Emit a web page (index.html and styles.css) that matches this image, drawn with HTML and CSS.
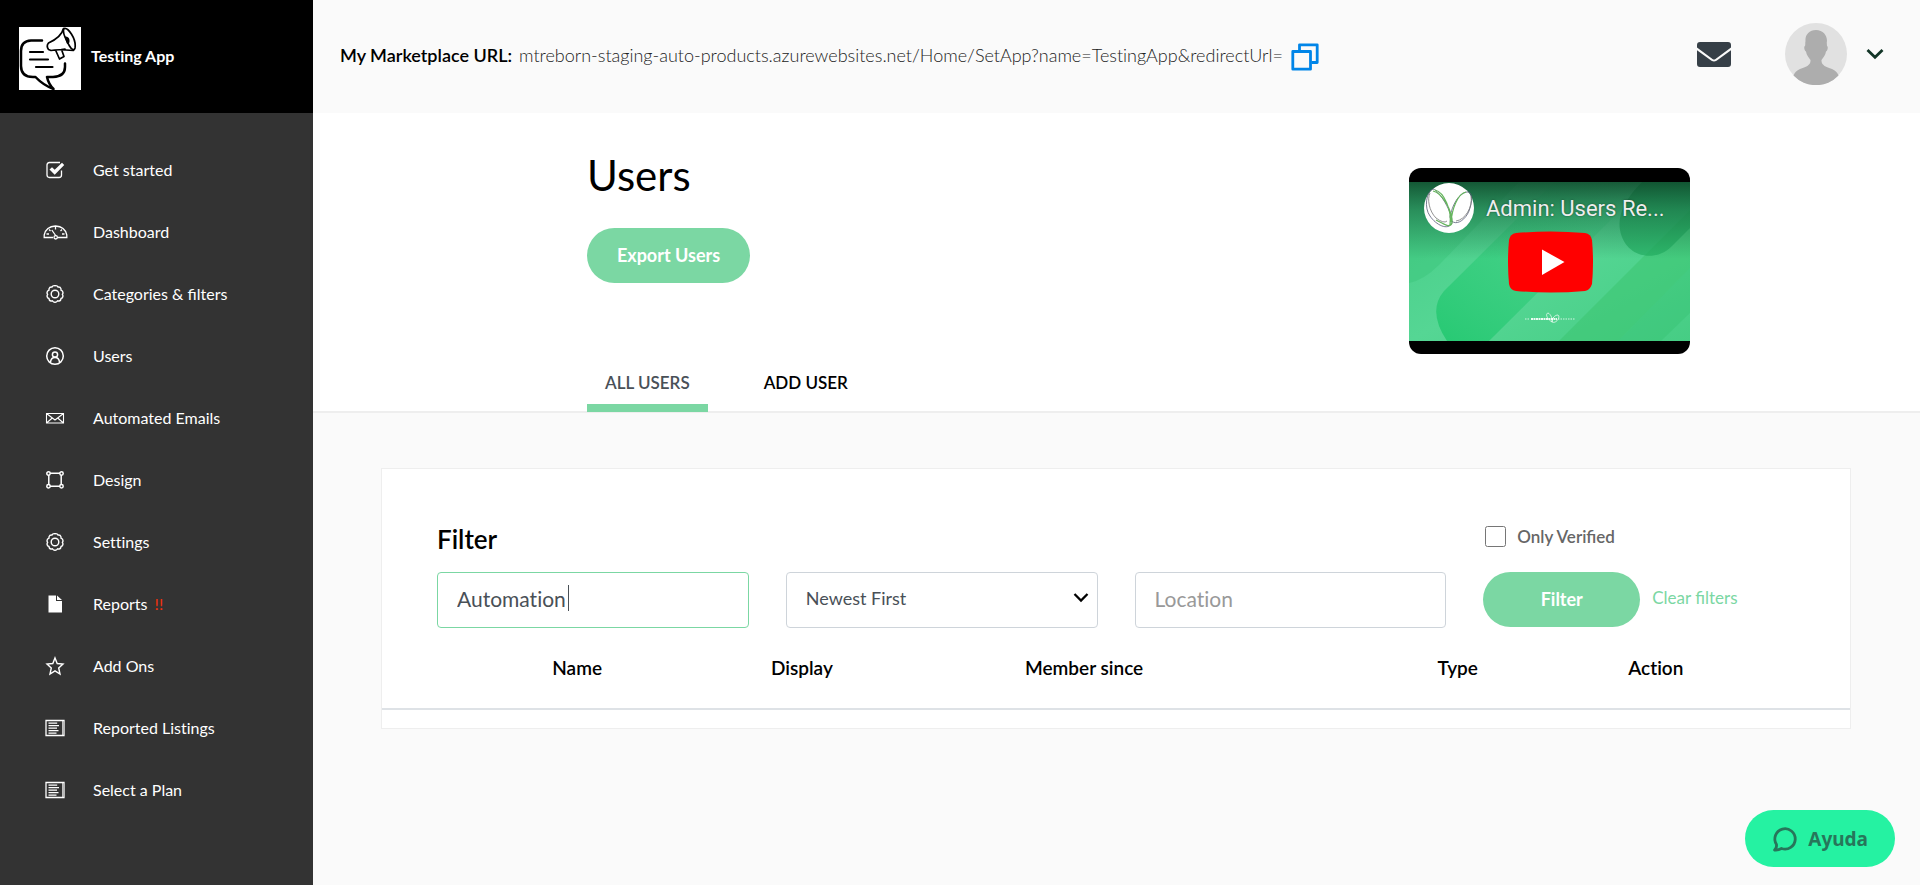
FILE: index.html
```html
<!DOCTYPE html>
<html lang="en">
<head>
<meta charset="utf-8">
<title>Users - Testing App</title>
<link rel="stylesheet" href="styles.css">
</head>
<body>
<svg class="symbols" aria-hidden="true">
  <symbol id="gear" viewBox="0 0 20 20"><g fill="none" stroke="currentColor" stroke-width="1.4"><path d="M10 1.700Q12.200 1.200 13.100 3.100 15.300 2.800 15.900 4.600 16.100 5.300 16 6.100 18 6.800 18 8.700 18 9.500 17.400 10.300 18.600 12 17.500 13.500 17 14.100 16.100 14.400 16 16.500 14.200 17 13.400 17.200 12.500 16.800 11.400 18.400 10 18.300 8.600 18.400 7.500 16.800 6.600 17.200 5.800 17 4 16.500 3.900 14.400 3 14.100 2.500 13.500 1.400 12 2.600 10.300 2 9.500 2 8.700 2 6.800 4 6.100 3.900 5.300 4.100 4.600 4.700 2.800 6.900 3.100 7.800 1.200 10 1.700Z"/><circle cx="10" cy="10" r="3.800"/></g></symbol>
  <symbol id="list" viewBox="0 0 20 20"><path d="M1 2.500h18v15H1z" fill="none" stroke="currentColor" stroke-width="1.300"/><path d="M17.500 3v14" stroke="currentColor" opacity=".7"/><path d="M3.500 5.200h8.700M3.500 7.700h10.500M3.500 10.200h8.500M3.500 12.700h10M3.500 15.200h8" stroke="currentColor" stroke-width="1.200"/></symbol>
</svg>
<div class="app">
  <aside class="sidebar">
    <div class="brand">
      <svg class="brand-logo" viewBox="0 0 62 63" aria-hidden="true"><path fill="#fff" d="M0 0h62v63H0z"/><g fill="none" stroke="#000" stroke-linecap="round" stroke-linejoin="round"><path stroke-width="2.500" d="M23 13.500H12Q2 14 2 24V39Q2 50 14 50H16.500Q24 58 34.500 62Q29.500 57 28 50H34Q46 49.500 46 40V36.500"/><path stroke-width="2.200" d="M11 25H24M11 32.500H29M17 40H33.500"/><path stroke-width="1.700" d="M44.500 1.500Q42.500 10 29.500 16Q27 19 29.500 22.500L32 23.500Q38 22 54.500 23.500M32 23.500L36.500 23 40.500 32 45 29.500 42.500 22.500 46 22"/><path stroke-width="1.700" d="M45 1.500C49 0 57.500 12 56 21C55.500 23.500 53 23.500 50.500 19C47 13 43 5 45 1.500Z"/></g><path d="M45.500 9.500Q50 9 50.500 13Q51 17 48 17Z"/></svg>
      <span>Testing App</span>
    </div>
    <nav class="menu">
      <a href="#"><svg viewBox="0 0 20 20"><path d="M16.500 10.500V15Q16.500 17.500 14 17.500H4.500Q2 17.500 2 15V5Q2 2.500 4.500 2.500H15" fill="none" stroke="currentColor" stroke-width="1.300"/><path d="M4.500 9.500L7 7.200 9.700 9.800 17 2.700 19.200 5 9.700 14.700Z" fill="currentColor"/></svg><span>Get started</span></a>
      <a href="#"><svg class="wide" viewBox="0 0 25 20"><g fill="none" stroke="currentColor" stroke-width="1.300"><path d="M10 15.500H1.200V13Q3 4.500 12.500 4Q22 4.500 23.800 13V15.500H14.500"/><path d="M12.500 4.500V7.500M3.500 12H6M19 12H21.500M6 7.500L7.500 9M19 7.500L17.500 9M8.800 8L13 14"/><circle cx="12.700" cy="15.300" r="1.700"/></g></svg><span>Dashboard</span></a>
      <a href="#"><svg><use href="#gear"/></svg><span class="ligatures">Categories &amp; filters</span></a>
      <a href="#"><svg viewBox="0 0 20 20"><g fill="none" stroke="currentColor" stroke-width="1.500"><circle cx="10" cy="10" r="8.300"/><circle cx="10" cy="8.500" r="2.600"/><path d="M5.500 16Q6 11.500 10 11.500Q14 11.500 14.500 16"/></g></svg><span>Users</span></a>
      <a href="#"><svg viewBox="0 0 20 20"><path d="M1.500 5.500h17v9.500h-17zM1.500 5.500L10 12 18.500 5.500M1.500 15L7.300 10M18.500 15L12.700 10" fill="none" stroke="currentColor" stroke-width="1.100"/></svg><span>Automated Emails</span></a>
      <a href="#"><svg viewBox="0 0 20 20"><g fill="none" stroke="currentColor" stroke-width="1.500"><path d="M5 3.200H15M5 16.300H15M3.800 5V15M16.200 5V15"/><circle cx="3.500" cy="3.500" r="1.700"/><circle cx="16.500" cy="3.500" r="1.700"/><circle cx="3.500" cy="16.200" r="1.700"/><circle cx="16.500" cy="16.200" r="1.700"/></g></svg><span>Design</span></a>
      <a href="#"><svg><use href="#gear"/></svg><span>Settings</span></a>
      <a href="#"><svg viewBox="0 0 20 20"><path d="M3.500 1.500H11V7H17V18.500H3.500ZM12 1.500L17 6H12Z" fill="currentColor"/></svg><span>Reports <b class="alert">!!</b></span></a>
      <a href="#"><svg viewBox="0 0 20 20"><path d="M10 2L12.200 7.500 18 8 13.700 12 15 18 10 14.900 5 18 6.300 12 2 8 7.800 7.500Z" fill="none" stroke="currentColor" stroke-width="1.400"/></svg><span>Add Ons</span></a>
      <a href="#"><svg><use href="#list"/></svg><span>Reported Listings</span></a>
      <a href="#"><svg><use href="#list"/></svg><span>Select a Plan</span></a>
    </nav>
  </aside>
  <div class="main">
    <header class="topbar">
      <strong class="url-label">My Marketplace URL:</strong>
      <span class="url">mtreborn-staging-auto-products.azurewebsites.net/Home/SetApp?name=TestingApp&amp;redirectUrl=</span>
      <button class="icon-button" type="button" aria-label="Copy URL"><svg width="28" height="28" viewBox="0 0 28 28"><g fill="none" stroke="#0085e8" stroke-width="2.800" stroke-linejoin="round"><path d="M8.500 7.500V1.800H26.200V19.500H20.500"/><path d="M1.800 8.500H19.500V26.200H1.800Z"/></g></svg></button>
      <div class="account">
        <button class="icon-button" type="button" aria-label="Messages"><svg width="34" height="26" viewBox="0 0 34 26"><path fill="#363f47" d="M3 0H31Q34 0 34 3V5.500L18.500 17Q17 18 15.500 17L0 5.500V3Q0 0 3 0ZM0 8.200L14.500 18.800Q17 20.300 19.500 18.800L34 8.200V22Q34 25 31 25H3Q0 25 0 22Z"/></svg></button>
        <button class="profile" type="button" aria-label="Account"><svg width="62" height="62" viewBox="0 0 62 62"><circle cx="31" cy="31" r="31" fill="#e1e1e1"/><path fill="#adadad" d="M31 7C38 7 42 12 42 18C41.500 20 42 21.500 42 23C43.500 23.500 42.500 28 41 28.500C40.500 32 38.500 34 36.500 37C36 42 41 44 47 46Q52 48 53.500 52.500A31 31 0 0 1 8.500 52.500Q10 48 15 46C21 44 26 42 25.500 37C23.500 34 21.500 32 21 28.500C19.500 28 18.500 23.500 20 23C20.500 21.500 20 20 20.500 18C20 12 24 7 31 7Z"/></svg><svg width="18" height="12" viewBox="0 0 18 12"><path d="M1.500 2L9 9.300 16.500 2" fill="none" stroke="#123527" stroke-width="2.800"/></svg></button>
      </div>
    </header>
    <section class="page-head">
      <div class="page-intro">
        <div class="page-title">
          <h1>Users</h1>
          <button class="pill export-button" type="button">Export Users</button>
        </div>
        <nav class="tabs">
          <a class="active" href="#">ALL USERS</a>
          <a href="#">ADD USER</a>
        </nav>
      </div>
      <a class="video" href="#" aria-label="Play video">
        <svg class="video-art" viewBox="0 0 281 186" aria-hidden="true">
          <defs>
            <linearGradient id="base" x1="0" y1="0" x2="1" y2="1"><stop offset="0" stop-color="#45cc86"/><stop offset=".5" stop-color="#55d694"/><stop offset="1" stop-color="#46cd84"/></linearGradient>
            <linearGradient id="shade" x1="0" y1="0" x2="0" y2="1"><stop offset="0" stop-color="#093b22" stop-opacity=".8"/><stop offset=".3" stop-color="#0f5132" stop-opacity=".48"/><stop offset=".8" stop-color="#0f5132" stop-opacity="0"/></linearGradient>
            <linearGradient id="band" x1="0" y1="1" x2="1" y2="0"><stop offset="0" stop-color="#27c973"/><stop offset="1" stop-color="#50d490" stop-opacity=".5"/></linearGradient>
            <clipPath id="frame"><path d="M0 14H281V173H0Z"/></clipPath>
          </defs>
          <path d="M0 0H281V186H0Z"/>
          <g clip-path="url(#frame)">
            <path fill="url(#base)" d="M0 14H281V173H0Z"/>
            <path fill="#3cc57b" opacity=".5" d="M0 115Q15 112 30 97L110 14H0Z"/>
            <path fill="url(#band)" d="M38 173Q18 143 35 123L145 14H240L80 173Z"/>
            <path fill="#39c46e" opacity=".5" d="M150 173L281 42V100L209 173Z"/>
            <path fill="#2fbd69" opacity=".3" d="M209 173L281 100V145L252 173Z"/>
            <path fill="#21ad60" opacity=".65" d="M233 14Q207 40 211 62C216 90 247 95 263 78L281 60V14Z"/>
            <path fill="url(#shade)" d="M0 14H281V110H0Z"/>
          </g>
          <circle cx="40" cy="40" r="25" fill="#fff"/>
          <g fill="none" stroke-width=".8"><path stroke="#555a75" d="M24 21C17 24 15 40 21 48C27 57 39 63 43 55C44 45 30 22 24 21ZM60 24C50 23 43 38 41 49C43 59 55 55 60 43C64 32 63 26 60 24Z"/><path stroke="#65b55d" stroke-width="1.200" d="M24 23C33 25 44 43 43 55C41 61 33 55 27 52M26 22C35 24 43 42 41 57M57 24C48 26 43 42 42 54"/><path stroke="#777" d="M21 25C18 31 20 43 27 50Q35 56 38 53M62 28C64 39 56 52 47 53"/></g>
          <path fill="red" d="M107 65Q142 62 176 65Q182 66 183 72Q185 94 183 116Q181 122 176 123Q142 126 107 123Q101 122 100 116Q98 94 100 72Q101 66 107 65Z"/>
          <path fill="#fff" d="M133 81.500L155.500 94 133 107Z"/>
          <g stroke="#fff" fill="none"><path stroke-width="2" opacity=".9" stroke-dasharray="2 .5" d="M122 151H148"/><path stroke-width="1.500" opacity=".5" stroke-dasharray="1.500 1" d="M116 151H121M149 151H166"/><path stroke-width=".7" d="M143 154C138 151 136 146 139 145C142 146 144 152 143 154C147 156 152 149 149 147C146 147 143 150 143 154Z"/></g>
        </svg>
        <span class="video-title">Admin: Users Re...</span>
      </a>
    </section>
    <main class="content">
      <section class="card">
        <form class="filters">
          <label class="filter-heading" for="keyword">Filter</label>
          <label class="verified ligatures"><input type="checkbox">Only Verified</label>
          <div class="focus-field"><input class="field active-field" id="keyword" type="text" value="Automation"><span class="caret"></span></div>
          <div class="select-wrap">
            <select class="field" aria-label="Sort order"><option>Newest First</option></select>
            <svg width="16" height="11" viewBox="0 0 16 11"><path d="M1.500 2L8 8.500 14.500 2" fill="none" stroke="#000" stroke-width="2.300"/></svg>
          </div>
          <input class="field" type="text" placeholder="Location" aria-label="Location">
          <div class="actions">
            <button class="pill filter-button" type="button">Filter</button>
            <a class="ligatures" href="#">Clear filters</a>
          </div>
        </form>
        <table class="users">
          <colgroup><col class="c-avatar"><col class="c-name"><col class="c-display"><col class="c-since"><col class="c-type"><col></colgroup>
          <thead><tr><td></td><th>Name</th><th>Display</th><th>Member since</th><th>Type</th><th>Action</th></tr></thead>
        </table>
      </section>
    </main>
  </div>
</div>
<button class="help" type="button"><svg width="26" height="26" viewBox="0 0 26 26"><path d="M4.500 18.500A10.200 10.200 0 1 1 9.500 22.500Q6 24.500 2.500 24Q5 22 4.500 18.500Z" fill="none" stroke="#27765a" stroke-width="2.800" stroke-linejoin="round"/></svg>Ayuda</button>
</body>
</html>
```

FILE: styles.css
```css
* { box-sizing: border-box; }
body { margin: 0; background: #fafafa; color: #000; font-family: Lato, "Liberation Sans", sans-serif; font-size: 16px; line-height: 24px; font-variant-ligatures: no-common-ligatures; }
a { color: inherit; text-decoration: none; }
button, input, select { font: inherit; font-variant-ligatures: inherit; color: inherit; margin: 0; }
button { border: 0; background: none; padding: 0; cursor: pointer; }
svg { display: block; flex: none; }
.ligatures { font-variant-ligatures: normal; }
.symbols { position: absolute; width: 0; height: 0; }
.app { display: flex; min-height: 100vh; }

.sidebar { flex: 0 0 313px; background: #333; color: #fff; }
.brand { display: flex; align-items: center; gap: 10px; height: 113px; padding: 4px 19px 0; background: #000; font-weight: 700; }
.brand span { padding-bottom: 6px; }
.brand-logo { width: 62px; height: 63px; }
.menu { display: flex; flex-direction: column; padding: 26px 0; }
.menu a { display: grid; grid-template-columns: 24px 1fr; column-gap: 26px; align-items: center; height: 62px; padding-left: 43px; }
.menu svg { width: 20px; height: 20px; justify-self: center; }
.menu svg.wide { width: 25px; }
.alert { color: #f4320c; font-weight: 400; margin-left: 3px; }

.main { flex: 1; min-width: 0; }
.topbar { display: flex; align-items: center; height: 113px; padding: 0 36px 5px 27px; font-size: 18px; }
.url-label { font-weight: 600; margin-right: 7px; }
.url-label, .url { padding-top: 2px; }
.url { color: #222; margin-right: 8px; font-weight: 300; }
.topbar .icon-button { padding-top: 6px; }
.account { display: flex; align-items: center; gap: 54px; margin-left: auto; }
.account .icon-button { padding-top: 1px; }
.profile { display: flex; align-items: center; gap: 19px; }

.page-head { display: flex; justify-content: space-between; padding: 0 230px 0 274px; background: #fff; border-bottom: 2px solid #eee; }
.page-intro { display: flex; flex-direction: column; justify-content: space-between; gap: 80px; }
.page-title { display: flex; flex-direction: column; align-items: flex-start; gap: 29px; padding-top: 38px; }
h1 { margin: 0; font-size: 42px; line-height: 48px; font-weight: 400; }
.pill { height: 55px; padding: 0 0 2px; border-radius: 28px; background: #7bd7a3; color: #fff; font-size: 18px; font-weight: 700; }
.export-button { width: 163px; }
.tabs { display: flex; gap: 38px; margin-bottom: -1px; font-size: 17px; font-weight: 600; }
.tabs a { padding: 0 18px 8px; border-bottom: 8px solid transparent; line-height: 26px; }
.tabs .active { color: #495057; border-color: #7bd7a3; }
.video { position: relative; align-self: flex-start; margin: 55px 0 57px; width: 281px; border-radius: 12px; overflow: hidden; }
.video-art { width: 281px; height: 186px; }
.video-title { position: absolute; left: 77px; top: 25px; white-space: nowrap; font-family: Roboto, sans-serif; font-size: 22px; line-height: 32px; color: #eee; text-shadow: 0 0 2px rgba(0, 0, 0, .5); }

.content { padding: 55px 69px 40px 68px; }
.card { border: 1px solid #eee; background: #fff; padding-bottom: 18px; }
.filters { display: grid; grid-template-columns: repeat(4, 1fr); column-gap: 37px; row-gap: 17px; padding: 54px 55px 0; }
.filter-heading { grid-column: 1 / 4; font-size: 26px; line-height: 32px; font-weight: 600; }
.verified { display: flex; align-items: center; gap: 11px; padding: 0 0 5px 2px; color: #666; font-size: 17px; font-weight: 600; }
.verified input { width: 21px; height: 21px; }
.field { display: block; width: 100%; height: 56px; padding: 0 19px 4px; border: 1px solid #ced4da; border-radius: 4px; background: #fff; color: #495057; font-size: 21px; outline: 0; }
.field::placeholder { color: #999; }
.focus-field { position: relative; }
.active-field { border-color: #7bd7a3; }
.caret { position: absolute; left: 131px; top: 13px; width: 1px; height: 26px; background: #495057; }
.select-wrap { display: grid; align-items: center; }
.select-wrap > * { grid-area: 1 / 1; }
.select-wrap svg { justify-self: end; margin: 0 9px 6px 0; pointer-events: none; }
select.field { appearance: none; font-size: 18px; }
.actions { display: flex; align-items: center; gap: 12px; padding-bottom: 1px; color: #7bd7a3; font-size: 17px; }
.actions a { padding-bottom: 3px; }
.filter-button { width: 157px; }
.users { width: 100%; margin-top: 15px; border-collapse: collapse; table-layout: fixed; font-size: 19px; line-height: 24px; }
.users th { padding: 13px 0 28px; text-align: left; font-weight: 600; }
.users thead { border-bottom: 2px solid #dee2e6; }
.c-avatar { width: 11.6%; }
.c-name { width: 14.9%; }
.c-display { width: 17.3%; }
.c-since { width: 28.1%; }
.c-type { width: 13%; }

.help { position: fixed; right: 25px; bottom: 18px; display: flex; align-items: center; gap: 10px; height: 57px; padding: 0 27px; border-radius: 29px; background: #25f2a2; color: #27765a; font-family: "Noto Sans", sans-serif; font-size: 19px; font-weight: 700; }
```
